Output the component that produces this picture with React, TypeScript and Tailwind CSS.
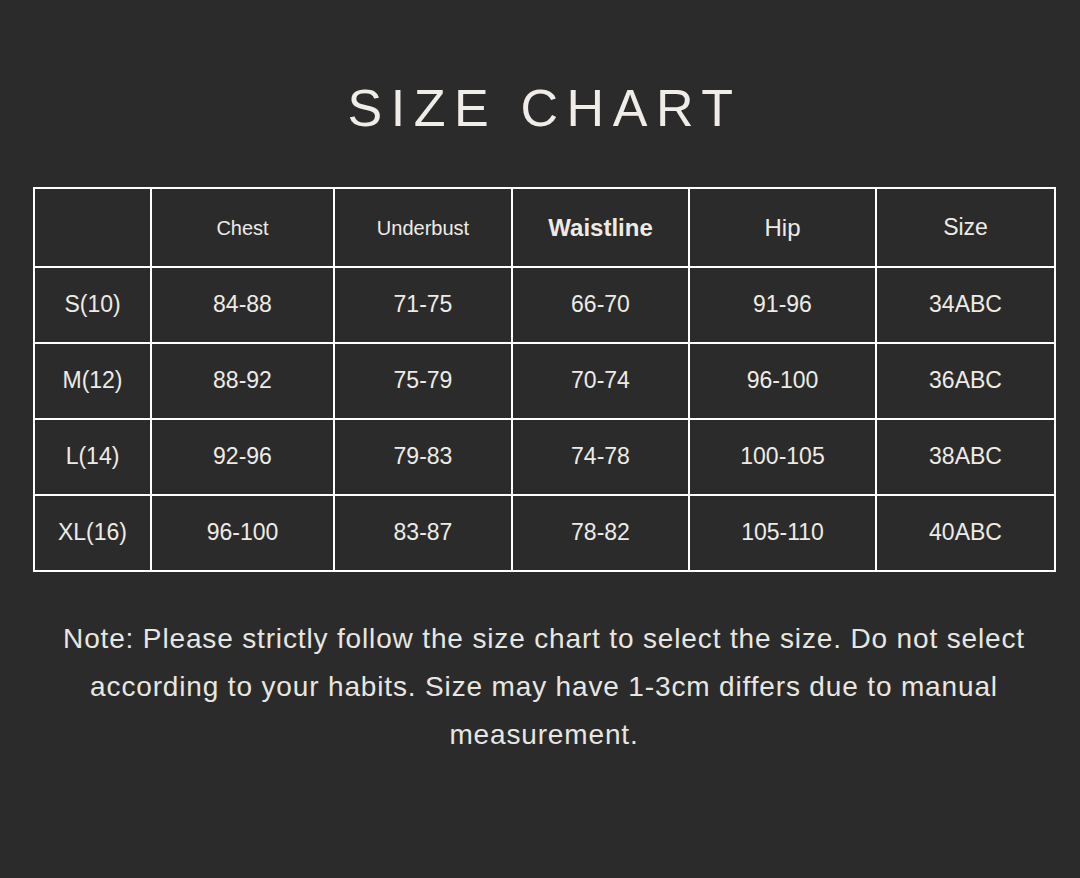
import React from 'react';

const rows = [
  ['S(10)', '84-88', '71-75', '66-70', '91-96', '34ABC'],
  ['M(12)', '88-92', '75-79', '70-74', '96-100', '36ABC'],
  ['L(14)', '92-96', '79-83', '74-78', '100-105', '38ABC'],
  ['XL(16)', '96-100', '83-87', '78-82', '105-110', '40ABC'],
];

const colWidths = ['w-[117px]', 'w-[183px]', 'w-[178px]', 'w-[177px]', 'w-[187px]', 'w-[179px]'];

export default function App() {
  return (
    <div className="w-[1080px] h-[878px] bg-[#2b2b2b] text-[#eeebe6] flex flex-col font-['Liberation_Sans',Arial,sans-serif]">
      <h1 className="mt-[78px] h-[60px] text-center text-[52px] leading-[60px] tracking-[8.6px] pl-[9px] text-[#f0ede8] font-normal">
        SIZE CHART
      </h1>

      <table className="mt-[49px] ml-[33px] w-[1021px] border-collapse table-fixed">
        <colgroup>
          {colWidths.map((w, i) => (
            <col key={i} className={w} />
          ))}
        </colgroup>
        <thead>
          <tr className="h-[79px]">
            <th className="border-2 border-white"></th>
            <th className="border-2 border-white text-[20px] font-normal">Chest</th>
            <th className="border-2 border-white text-[20px] font-normal">Underbust</th>
            <th className="border-2 border-white text-[24px] font-bold">Waistline</th>
            <th className="border-2 border-white text-[24px] font-normal">Hip</th>
            <th className="border-2 border-white text-[23px] font-normal">Size</th>
          </tr>
        </thead>
        <tbody>
          {rows.map(r => (
            <tr key={r[0]} className="h-[76px]">
              {r.map((c, i) => (
                <td key={i} className="border-2 border-white text-center text-[23px] pb-[2px]">{c}</td>
              ))}
            </tr>
          ))}
        </tbody>
      </table>

      <p className="mt-[43px] text-center text-[28px] leading-[48px] tracking-[0.85px] text-[#e8e6e0] pl-[8px]">
        Note: Please strictly follow the size chart to select the size. Do not select
        <br />
        according to your habits. Size may have 1-3cm differs due to manual
        <br />
        measurement.
      </p>
    </div>
  );
}
